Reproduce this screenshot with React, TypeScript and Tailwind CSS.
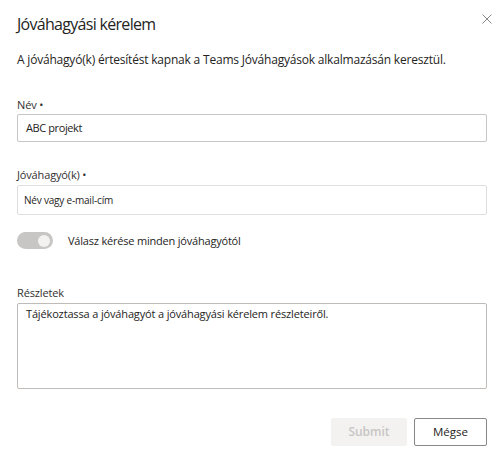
import React from "react";

const font = { fontFamily: '"Open Sans", "Noto Sans", Arial, sans-serif' };

export default function App() {
  return (
    <div
      className="relative w-[500px] h-[455px] bg-white text-[#323130] px-[17px] overflow-hidden"
      style={font}
    >
      {/* close */}
      <button className="absolute left-[482px] top-[14px] w-[10px] h-[10px] flex items-center justify-center">
        <svg width="10" height="10" viewBox="0 0 10 10">
          <path d="M0.5 0.5 L9.5 9.5 M9.5 0.5 L0.5 9.5" stroke="#8a8886" strokeWidth="1" />
        </svg>
      </button>

      <h1 className="pt-[12px] text-[16px] leading-[24px] text-[#252423] tracking-[-0.7px]">
        Jóváhagyási kérelem
      </h1>

      <p className="mt-[16px] text-[12px] leading-[16px] tracking-[-0.2px] text-[#252423]">
        A jóváhagyó(k) értesítést kapnak a Teams Jóváhagyások alkalmazásán keresztül.
      </p>

      <label className="block mt-[29px] text-[11px] leading-[16px] tracking-[-0.15px]">Név •</label>
      <div className="mt-[1px] h-[28px] w-[470px] border border-[#c8c6c4] rounded-[2px] flex items-center px-[8px] text-[11px] tracking-[-0.4px] text-[#252423]">
        ABC projekt
      </div>

      <label className="block mt-[25px] text-[11px] leading-[16px] tracking-[-0.15px]">Jóváhagyó(k) •</label>
      <div className="mt-[2px] h-[30px] w-[470px] border border-[#e1dfdd] rounded-[2px] flex items-center px-[6px] text-[10px] tracking-[-0.2px] text-[#252423]">
        Név vagy e-mail-cím
      </div>

      <div className="mt-[17px] h-[17px] flex items-center">
        <div className="w-[36px] h-[17px] rounded-full bg-[#c8c6c4] flex items-center justify-end pr-[3px]">
          <div className="w-[12px] h-[12px] rounded-full bg-[#f3f2f1]" />
        </div>
        <span className="ml-[15px] text-[11px] leading-[16px] tracking-[-0.2px] text-[#252423]">
          Válasz kérése minden jóváhagyótól
        </span>
      </div>

      <label className="block mt-[36px] text-[11px] leading-[16px] tracking-[-0.15px]">Részletek</label>
      <div className="mt-[2px] h-[86px] w-[470px] border border-[#bebbb8] rounded-[2px] px-[8px] pt-[2px] text-[11px] leading-[16px] tracking-[-0.15px] text-[#252423]">
        Tájékoztassa a jóváhagyót a jóváhagyási kérelem részleteiről.
      </div>

      <div className="mt-[29px] flex justify-end gap-[7px] w-[470px]">
        <button className="w-[76px] h-[28px] rounded-[2px] bg-[#f3f2f1] text-[#c8c6c4] text-[12px] font-semibold">
          Submit
        </button>
        <button className="w-[73px] h-[28px] rounded-[2px] bg-white border border-[#8a8886] text-[#252423] text-[11.5px]">
          Mégse
        </button>
      </div>
    </div>
  );
}
